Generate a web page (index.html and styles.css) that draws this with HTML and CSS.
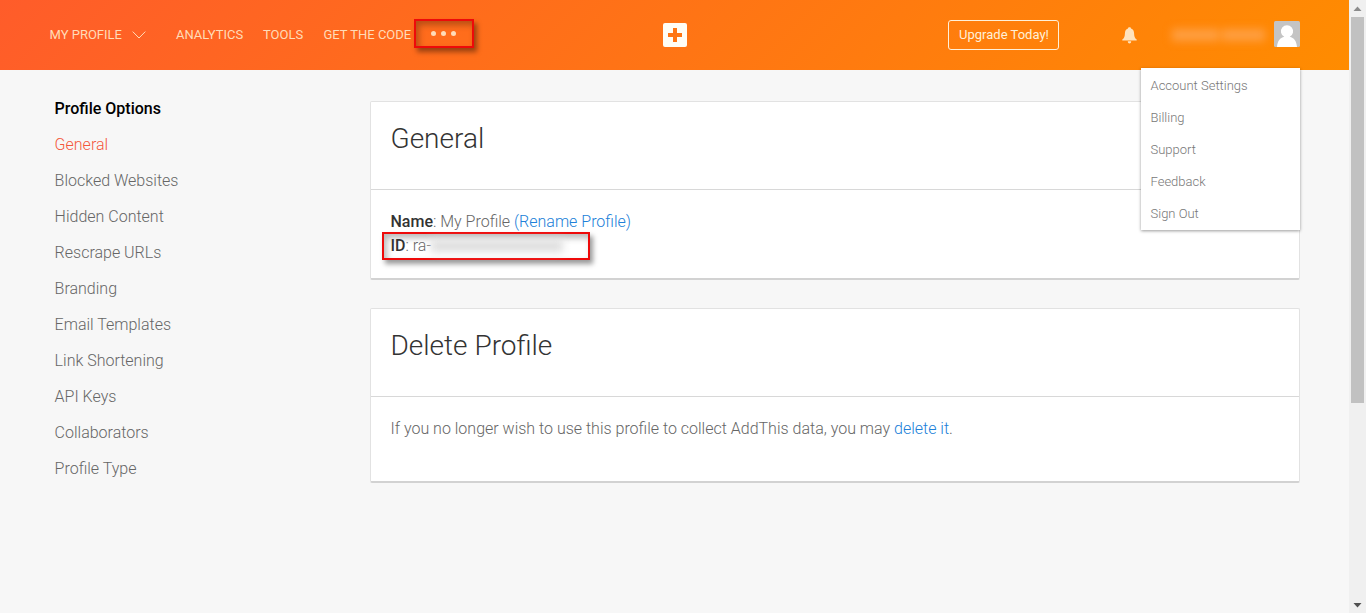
FILE: index.html
```html
<!DOCTYPE html>
<html lang="en">
<head>
<meta charset="utf-8">
<title>Profile Options</title>
<link rel="stylesheet" href="styles.css">
</head>
<body>
<div class="window">
  <div class="page">
    <header class="topbar">
      <nav class="nav">
        <a class="nav-item nav-profile">MY PROFILE
          <svg class="chevron" width="14" height="8" viewBox="0 0 14 8"><path d="M.7.6 7 7 13.300.6" fill="none" stroke="currentColor"/></svg>
        </a>
        <a class="nav-item nav-analytics">ANALYTICS</a>
        <a class="nav-item nav-tools">TOOLS</a>
        <a class="nav-item nav-code">GET THE CODE</a>
        <a class="more marked"><i></i><i></i><i></i></a>
      </nav>
      <svg class="logo" width="24" height="24" viewBox="0 0 24 24"><rect width="24" height="24" rx="2" fill="#fffdf5"/><path d="M10 5h4v5h5v4h-5v5h-4v-5H5v-4h5z" fill="#ff7613"/></svg>
      <div class="account">
        <a class="upgrade">Upgrade Today!</a>
        <svg class="bell" width="15" height="17" viewBox="0 0 15 17"><path d="M7.500.3C8.400.3 9 .8 9 1.500c2.200.7 3 2.500 3.100 5 .1 3 .6 4.500 2.600 6.100v1H.3v-1c2-1.600 2.500-3.100 2.600-6.100.1-2.500.9-4.300 3.100-5C6 .8 6.600.3 7.500.3z M5.800 14.200h3.400c0 2.900-3.400 2.900-3.400 0z" fill="#ffe3bd"/></svg>
        <span class="user-name"><i class="smudge-first"></i><i class="smudge-last"></i></span>
        <svg class="avatar" width="26" height="26" viewBox="0 0 26 26"><rect width="26" height="26" rx="1.500" fill="#c4c4c4"/><path d="M3 26c.5-6 3-9.300 7.300-10.200a6.100 6.100 0 1 1 5.400 0C20 16.700 22.500 20 23 26z" fill="#fff"/></svg>
        <ul class="menu">
          <li>Account Settings</li>
          <li>Billing</li>
          <li>Support</li>
          <li>Feedback</li>
          <li>Sign Out</li>
        </ul>
      </div>
    </header>
    <div class="content">
      <aside class="sidebar">
        <h2>Profile Options</h2>
        <ul>
          <li class="active">General</li>
          <li>Blocked Websites</li>
          <li>Hidden Content</li>
          <li>Rescrape URLs</li>
          <li>Branding</li>
          <li>Email Templates</li>
          <li>Link Shortening</li>
          <li>API Keys</li>
          <li>Collaborators</li>
          <li>Profile Type</li>
        </ul>
      </aside>
      <main class="cards">
        <section class="card">
          <h1>General</h1>
          <div class="card-body general-body">
            <p><b>Name</b>: My Profile <a>(Rename Profile)</a></p>
            <p class="profile-id marked"><span><b>ID</b>: ra-</span><i class="smudge-id"></i></p>
          </div>
        </section>
        <section class="card">
          <h1>Delete Profile</h1>
          <div class="card-body delete-body">
            <p>If you no longer wish to use this profile to collect AddThis data, you may <a>delete it</a>.</p>
          </div>
        </section>
      </main>
    </div>
  </div>
  <div class="scrollbar">
    <svg width="9" height="5" viewBox="0 0 9 5"><path d="M.5 5 4.500.5 8.500 5z" fill="#8b8b8b"/></svg>
    <div class="thumb"></div>
    <svg class="arrow-down" width="9" height="5" viewBox="0 0 9 5"><path d="M.5 0h8l-4 4.500z" fill="#505050"/></svg>
  </div>
</div>
</body>
</html>
```
FILE: styles.css
```css
* { box-sizing: border-box; }
body { margin: 0; font-family: Roboto, "Liberation Sans", sans-serif; font-weight: 300; color: #666; }
h1, h2, p, ul { margin: 0; padding: 0; }
li { list-style: none; }
.window { display: flex; height: 613px; overflow: hidden; background: #f7f7f7; }
.page { width: 1349px; }

.topbar { display: grid; grid-template-columns: 663px 24px 1fr; align-items: center; height: 70px; background: linear-gradient(135deg, #ff5c2a, #ff8c00); }
.nav { display: flex; align-items: center; padding-left: 49.5px; height: 70px; }
.nav-item { font-size: 13px; font-weight: 400; line-height: 20px; color: #ffdcb8; white-space: nowrap; }
.nav-profile { display: flex; align-items: center; gap: 10px; width: 126.5px; }
.nav-analytics { width: 87px; }
.nav-tools { width: 60.400px; }
.nav-code { width: 90.600px; }
.marked { border: 2px solid #ee0a0a; box-shadow: 3px 4px 5px rgba(0,0,0,.4), inset 3px 4px 6px rgba(0,0,0,.28); }
.more { display: flex; align-items: center; justify-content: center; gap: 5px; width: 60px; height: 29px; margin-top: -3px; }
.more i { width: 5px; height: 5px; border-radius: 50%; background: #ffdcb8; }

.account { position: relative; display: flex; align-items: center; height: 70px; padding-left: 261px; }
.upgrade { width: 111px; height: 30px; border: 1px solid #fff0d8; border-radius: 3px; padding-left: 1px; font-size: 13px; font-weight: 400; line-height: 28px; text-align: center; color: #fff0d8; white-space: nowrap; }
.bell { margin-left: 63px; }
.user-name { display: flex; gap: 3px; width: 94px; margin-left: 35px; filter: blur(4px); }
.user-name i { height: 12px; background: #ff9f42; }
.smudge-first { width: 47px; }
.smudge-last { width: 43px; }
.avatar { margin-left: 8px; margin-top: -2px; }
.menu { position: absolute; top: 68px; left: 453.500px; width: 159px; height: 162px; padding: 2px 0 0 10px; background: #fff; box-shadow: 0 1px 3px rgba(0,0,0,.4); font-size: 13px; line-height: 32px; color: #777; }

.content { display: flex; padding-left: 54.600px; }
.sidebar { width: 315.400px; padding-top: 21px; font-size: 16px; line-height: 36px; }
.sidebar h2 { font-size: 16px; font-weight: 500; line-height: 36px; color: #000; }
.sidebar .active { color: #f4573c; }
.cards { display: flex; flex-direction: column; gap: 28px; width: 930px; padding-top: 31px; }
.card { border: 1px solid #e2e2e2; border-bottom: 2px solid #d2d2d2; border-radius: 2px; background: #fff; }
.card h1 { height: 88px; padding: 18px 19.500px; border-bottom: 1px solid #d8d8d8; font-size: 28px; font-weight: 300; line-height: 38px; color: #333; }
.card-body { padding: 20px 19.500px 0; font-size: 16px; line-height: 24px; }
.card-body a { color: #2080d8; }
.card-body b { font-weight: 500; color: #333; }
.general-body { height: 88px; }
.delete-body { height: 84px; }
.profile-id { display: flex; align-items: center; width: 208px; height: 28px; margin: -2px 0 0 -8.500px; padding-left: 6.500px; }
.smudge-id { width: 132px; height: 12px; background: #ddd; filter: blur(4px); }

.scrollbar { display: flex; flex-direction: column; align-items: center; width: 17px; padding: 6px 0 5px; background: #f0f0f0; }
.thumb { width: 13px; height: 386px; margin: 6px 1px 0 0; background: #c1c1c1; }
.arrow-down { margin-top: auto; }
```
